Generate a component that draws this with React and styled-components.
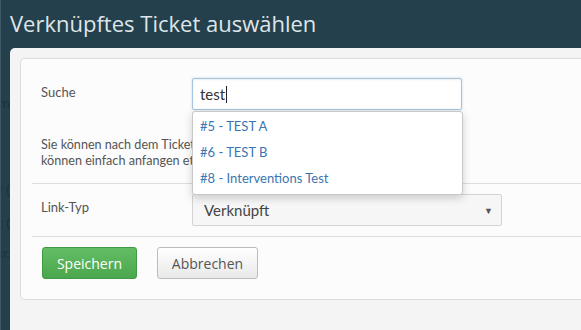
import React from "react";
import styled, { createGlobalStyle } from "styled-components";

const GlobalStyle = createGlobalStyle`
  html, body {
    margin: 0;
    padding: 0;
    background: #24404c;
  }
`;

const Screen = styled.div`
  width: 581px;
  height: 330px;
  overflow: hidden;
  background: #24404c;
  border-left: 1px solid #3f5864;
  box-sizing: border-box;
  display: flex;
  flex-direction: column;
  font-family: Lato, "Open Sans", sans-serif;
`;

const Header = styled.div`
  height: 48px;
  flex: none;
  padding-left: 9px;
  display: flex;
  align-items: center;
  padding-bottom: 2px;
  box-sizing: border-box;
`;

const Title = styled.h1`
  margin: 0;
  font-family: "Open Sans", sans-serif;
  font-weight: 400;
  font-size: 22px;
  color: #dfe5e8;
`;

const Body = styled.div`
  flex: 1;
  display: flex;
  min-height: 0;
`;

// page text showing through at the left edge, behind the dialog
const Backdrop = styled.div`
  width: 9px;
  flex: none;
  overflow: hidden;
  font-size: 14px;
  color: #18333f;
  white-space: nowrap;
  display: flex;
  flex-direction: column;
  align-items: flex-end;
`;

const Fragment = styled.span`
  display: block;
  margin-top: ${(p) => p.gap}px;
  line-height: 16px;
`;

const Modal = styled.div`
  flex: 1;
  background: #f4f4f4;
  border-top-left-radius: 5px;
  padding: 10px 0 0 10px;
  min-width: 0;
`;

const Panel = styled.div`
  background: #fcfcfc;
  border: 1px solid #dcdcdc;
  border-right: none;
  border-radius: 5px 0 0 5px;
  padding: 20px 0 20px 11px;
`;

const Row = styled.div`
  display: grid;
  grid-template-columns: 160px 1fr;
  align-items: start;
`;

const Label = styled.div`
  padding: 5px 0 0 9px;
  font-size: 13px;
  color: #555;
  line-height: 16px;
`;

const Field = styled.div`
  position: relative;
`;

const SearchBox = styled.div`
  width: 270px;
  height: 32px;
  margin-top: -1px;
  box-sizing: border-box;
  border: 1px solid #a6c4dc;
  border-radius: 2px;
  background: #fff;
  box-shadow: inset 0 1px 2px rgba(0, 0, 0, 0.08), 0 0 3px rgba(102, 160, 210, 0.35);
  padding: 0 7px;
  display: flex;
  align-items: center;
  font-size: 15px;
  color: #333;
`;

const Caret = styled.span`
  display: inline-block;
  width: 1px;
  height: 17px;
  background: #222;
  margin-left: 1px;
`;

const Suggestions = styled.ul`
  position: absolute;
  top: 32px;
  left: 0;
  width: 271px;
  box-sizing: border-box;
  margin: 0;
  padding: 2px 0;
  list-style: none;
  background: #fff;
  border: 1px solid #c8c8c8;
  border-radius: 3px;
  box-shadow: 0 3px 8px rgba(0, 0, 0, 0.18);
  z-index: 2;
`;

const Suggestion = styled.li`
  height: 26px;
  line-height: 25px;
  padding: 0 7px;
  font-size: 13px;
  color: #3a76b0;
`;

const Help = styled.p`
  margin: 27px 0 0 9px;
  font-size: 12.6px;
  line-height: 16px;
  color: #555;
  white-space: nowrap;
`;

const Divider = styled.hr`
  border: none;
  border-top: 1px solid #dddddd;
  margin: ${(p) => p.top}px 0 10px;
`;

const Select = styled.div`
  width: 310px;
  height: 32px;
  box-sizing: border-box;
  border: 1px solid #d4d4d4;
  border-radius: 2px;
  background: #f6f6f6;
  display: flex;
  align-items: center;
  justify-content: space-between;
  padding: 0 8px 0 11px;
  font-size: 15px;
  color: #444;
`;

const Arrow = styled.span`
  font-size: 9px;
  color: #555;
`;

const Actions = styled.div`
  display: flex;
  gap: 20px;
  padding-left: 10px;
`;

const Button = styled.button`
  height: 32px;
  padding: 0;
  width: ${(p) => (p.primary ? 95 : 101)}px;
  border-radius: 3px;
  font-family: "Open Sans", sans-serif;
  font-size: 14px;
  cursor: pointer;
  border: 1px solid ${(p) => (p.primary ? "#3f9a43" : "#bcbcbc")};
  color: ${(p) => (p.primary ? "#fff" : "#555")};
  background: ${(p) =>
    p.primary
      ? "linear-gradient(#62bd63, #4ca64e)"
      : "linear-gradient(#ffffff, #e9e9e9)"};
`;

export default function App() {
  return (
    <Screen>
      <GlobalStyle />
      <Header>
        <Title>Verknüpftes Ticket auswählen</Title>
      </Header>
      <Body>
        <Backdrop>
          <Fragment gap={47}>m</Fragment>
          <Fragment gap={71}>9 (</Fragment>
          <Fragment gap={17}>t (</Fragment>
          <Fragment gap={14}>kc</Fragment>
        </Backdrop>
        <Modal>
          <Panel>
            <Row>
              <Label>Suche</Label>
              <Field>
                <SearchBox>
                  test
                  <Caret />
                </SearchBox>
                <Suggestions>
                  <Suggestion>#5 - TEST A</Suggestion>
                  <Suggestion>#6 - TEST B</Suggestion>
                  <Suggestion>#8 - Interventions Test</Suggestion>
                </Suggestions>
              </Field>
            </Row>
            <Help>
              Sie können nach dem Ticketnamen oder der Ticketnummer suchen. Sie
              <br />
              können einfach anfangen etwas einzugeben.
            </Help>
            <Divider top={14} />
            <Row>
              <Label>Link-Typ</Label>
              <Select>
                Verknüpft
                <Arrow>▼</Arrow>
              </Select>
            </Row>
            <Divider top={10} />
            <Actions>
              <Button primary>Speichern</Button>
              <Button>Abbrechen</Button>
            </Actions>
          </Panel>
        </Modal>
      </Body>
    </Screen>
  );
}
